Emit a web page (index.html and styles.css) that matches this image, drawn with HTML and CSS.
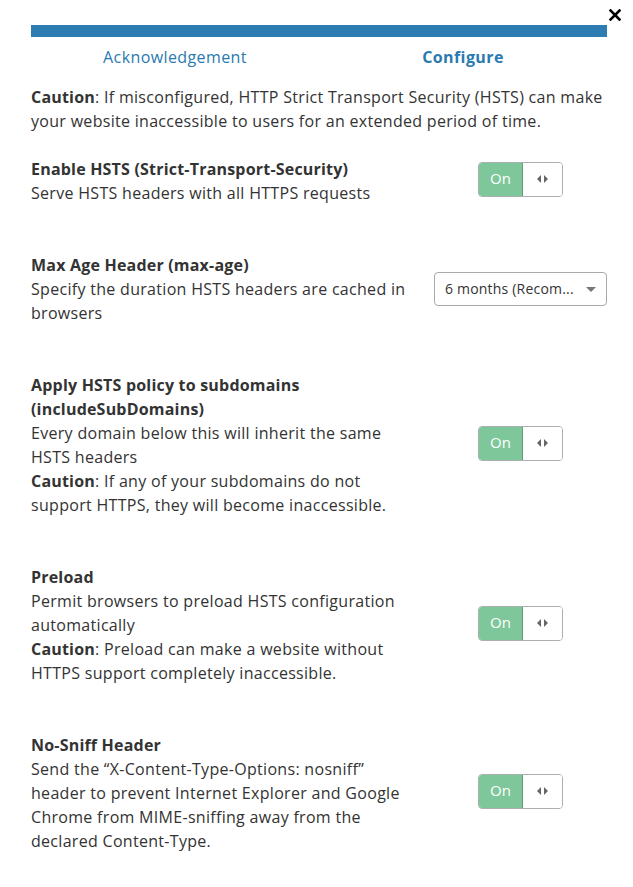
FILE: index.html
```html
<!DOCTYPE html>
<html>
<head>
<meta charset="utf-8">
<link rel="stylesheet" href="styles.css">
</head>
<body>
<div class="modal">
  <button class="close" aria-label="Close">
    <svg width="12" height="12" viewBox="0 0 12 12"><path d="M1.5 1.5L10.5 10.5M10.5 1.5L1.5 10.5" stroke="#000" stroke-width="2.6" stroke-linecap="square"/></svg>
  </button>
  <div class="progress"></div>
  <div class="tabs">
    <div class="tab">Acknowledgement</div>
    <div class="tab active">Configure</div>
  </div>
  <p class="intro"><b>Caution</b>: If misconfigured, HTTP Strict Transport Security (HSTS) can make your website inaccessible to users for an extended period of time.</p>

  <div class="row first">
    <div class="text">
      <div class="title">Enable HSTS (Strict-Transport-Security)</div>
      <div>Serve HSTS headers with all HTTPS requests</div>
    </div>
    <div class="control">
      <div class="toggle"><span class="on">On</span><span class="handle"><svg width="11" height="8" viewBox="0 0 11 8"><path d="M4 0L0 4L4 8Z M7 0L11 4L7 8Z" fill="#666"/></svg></span></div>
    </div>
  </div>

  <div class="row">
    <div class="text">
      <div class="title">Max Age Header (max-age)</div>
      <div>Specify the duration HSTS headers are cached in browsers</div>
    </div>
    <div class="control">
      <div class="select"><span>6 months (Recom...</span><svg width="10" height="5" viewBox="0 0 10 5"><path d="M0 0H10L5 5Z" fill="#777"/></svg></div>
    </div>
  </div>

  <div class="row">
    <div class="text">
      <div class="title">Apply HSTS policy to subdomains (includeSubDomains)</div>
      <div>Every domain below this will inherit the same HSTS headers</div>
      <div><b>Caution</b>: If any of your subdomains do not support HTTPS, they will become inaccessible.</div>
    </div>
    <div class="control">
      <div class="toggle"><span class="on">On</span><span class="handle"><svg width="11" height="8" viewBox="0 0 11 8"><path d="M4 0L0 4L4 8Z M7 0L11 4L7 8Z" fill="#666"/></svg></span></div>
    </div>
  </div>

  <div class="row">
    <div class="text">
      <div class="title">Preload</div>
      <div>Permit browsers to preload HSTS configuration automatically</div>
      <div><b>Caution</b>: Preload can make a website without HTTPS support completely inaccessible.</div>
    </div>
    <div class="control">
      <div class="toggle"><span class="on">On</span><span class="handle"><svg width="11" height="8" viewBox="0 0 11 8"><path d="M4 0L0 4L4 8Z M7 0L11 4L7 8Z" fill="#666"/></svg></span></div>
    </div>
  </div>

  <div class="row">
    <div class="text">
      <div class="title">No-Sniff Header</div>
      <div>Send the “X-Content-Type-Options: nosniff” header to prevent Internet Explorer and Google Chrome from MIME-sniffing away from the declared Content-Type.</div>
    </div>
    <div class="control">
      <div class="toggle"><span class="on">On</span><span class="handle"><svg width="11" height="8" viewBox="0 0 11 8"><path d="M4 0L0 4L4 8Z M7 0L11 4L7 8Z" fill="#666"/></svg></span></div>
    </div>
  </div>
</div>
</body>
</html>
```

FILE: styles.css
```css
* { box-sizing: border-box; }
html, body { margin: 0; padding: 0; background: #fff; }
body {
  font-family: "Open Sans", "Noto Sans", sans-serif;
  font-size: 16px;
  line-height: 24px;
  letter-spacing: 0.3px;
  color: #333;
}
.modal {
  position: relative;
  padding: 25px 26px 20px 31px;
}
.close {
  position: absolute;
  top: 9px;
  right: 12px;
  border: 0;
  background: none;
  padding: 0;
  width: 12px;
  height: 12px;
  line-height: 0;
}
.progress {
  height: 12px;
  background: #2d7db3;
}
.tabs {
  display: grid;
  grid-template-columns: 1fr 1fr;
  margin-top: 8px;
  color: #2a7ab0;
  font-size: 16px;
  letter-spacing: 0.4px;
}
.tab { text-align: center; }
.tab.active { font-weight: 700; }
.intro { margin: 16px 0 0; }
b { font-weight: 700; letter-spacing: 0.2px; }
.row {
  display: grid;
  grid-template-columns: 1fr 173px;
  column-gap: 24px;
  align-items: center;
  margin-top: 48px;
}
.row.first { margin-top: 24px; }
.title { font-weight: 700; letter-spacing: 0.2px; }
.control {
  display: flex;
  justify-content: center;
}
.toggle {
  display: flex;
  width: 85px;
  height: 35px;
  border: 1px solid #a9b0ad;
  border-radius: 4px;
  overflow: hidden;
  margin-bottom: 4px;
  letter-spacing: 0;
}
.toggle .on {
  width: 44px;
  background: #7dc79a;
  border-right: 1px solid #5d9e76;
  color: #fff;
  display: flex;
  align-items: center;
  justify-content: center;
  font-size: 15px;
  padding-bottom: 3px;
}
.toggle .handle {
  flex: 1;
  display: flex;
  align-items: center;
  justify-content: center;
  background: #fff;
}
.select {
  width: 173px;
  height: 34px;
  border: 1px solid #aaa;
  border-radius: 4px;
  display: flex;
  align-items: center;
  justify-content: space-between;
  padding: 0 10px 0 10px;
  font-size: 14px;
  letter-spacing: 0.2px;
  color: #333;
}
```
